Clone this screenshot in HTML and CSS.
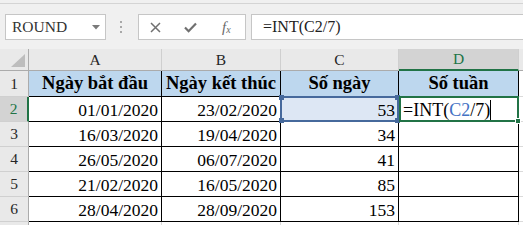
FILE: index.html
```html
<!DOCTYPE html>
<html>
<head>
<meta charset="utf-8">
<link rel="stylesheet" href="styles.css">
</head>
<body>
<div class="app">
  <div class="topstrip"></div>
  <div class="toolbar">
    <div class="namebox">
      <span class="nb-text">ROUND</span>
      <svg class="dd" width="8" height="5" viewBox="0 0 8 5"><path d="M0 0H8L4 4.5Z" fill="#7a7a7a"/></svg>
    </div>
    <div class="grip"><i></i><i></i><i></i></div>
    <div class="fxbox">
      <svg class="ico-x" width="11" height="11" viewBox="0 0 11 11"><path d="M1 1L10 10M10 1L1 10" stroke="#707070" stroke-width="1.5" fill="none"/></svg>
      <svg class="ico-ok" width="13" height="11" viewBox="0 0 13 11"><path d="M1 5.5L4.6 9.2L12 1.5" stroke="#707070" stroke-width="2.2" fill="none"/></svg>
      <span class="fx"><i>f</i><sub>x</sub></span>
    </div>
    <div class="formula">=INT(C2/7)</div>
  </div>
  <div class="sheet">
    <div class="corner"><svg class="tri" width="14" height="13" viewBox="0 0 14 13"><path d="M0 13H14V0Z" fill="#bdbdbd"/></svg></div>
    <div class="ch">A</div>
    <div class="ch">B</div>
    <div class="ch">C</div>
    <div class="ch sel">D</div>
    <div class="ch end"></div>

    <div class="rh">1</div>
    <div class="c hd">Ngày bắt đầu</div>
    <div class="c hd">Ngày kết thúc</div>
    <div class="c hd">Số ngày</div>
    <div class="c hd">Số tuần</div>
    <div class="e"></div>

    <div class="rh sel">2</div>
    <div class="c">01/01/2020</div>
    <div class="c">23/02/2020</div>
    <div class="c ref">53<span class="refbox"><b class="h tl"></b><b class="h tr"></b><b class="h bl"></b><b class="h br"></b></span></div>
    <div class="c act">=INT(<span class="blue">C2</span>/7)<span class="caret"></span><span class="actbox"><b class="gh"></b></span></div>
    <div class="e"></div>

    <div class="rh">3</div>
    <div class="c">16/03/2020</div>
    <div class="c">19/04/2020</div>
    <div class="c">34</div>
    <div class="c"></div>
    <div class="e"></div>

    <div class="rh">4</div>
    <div class="c">26/05/2020</div>
    <div class="c">06/07/2020</div>
    <div class="c">41</div>
    <div class="c"></div>
    <div class="e"></div>

    <div class="rh">5</div>
    <div class="c">21/02/2020</div>
    <div class="c">16/05/2020</div>
    <div class="c">85</div>
    <div class="c"></div>
    <div class="e"></div>

    <div class="rh">6</div>
    <div class="c">28/04/2020</div>
    <div class="c">28/09/2020</div>
    <div class="c">153</div>
    <div class="c"></div>
    <div class="e"></div>

    <div class="rh last">7</div>
    <div class="g"></div>
    <div class="g"></div>
    <div class="g"></div>
    <div class="g"></div>
    <div class="e"></div>
  </div>
</div>
</body>
</html>
```
FILE: styles.css
```css
* { box-sizing: border-box; margin: 0; padding: 0; }
html, body { width: 523px; height: 225px; overflow: hidden; background: #fff; }
body { font-family: "Liberation Serif", "Times New Roman", serif; color: #000; }

.topstrip { height: 4px; background: #f0f0f0; border-bottom: 1px solid #d4d4d4; }
.toolbar { height: 45px; background: #f0f0f0; display: flex; align-items: flex-start; padding-top: 10px; }

.namebox { margin-left: 5px; width: 101px; height: 26px; background: #fff; border: 1px solid #c6c6c6; display: flex; align-items: center; padding-left: 6px; padding-right: 5px; }
.nb-text { flex: 1; font-size: 15.5px; color: #333; }
.dd { display: block; }

.grip { margin-left: 14px; width: 2px; display: flex; flex-direction: column; gap: 3px; padding-top: 7px; }
.grip i { display: block; width: 2px; height: 2px; background: #a8a8a8; }

.fxbox { margin-left: 16px; width: 108px; height: 26px; background: #fff; border: 1px solid #c6c6c6; display: flex; align-items: center; padding-left: 11px; }
.ico-x { display: block; }
.ico-ok { display: block; margin-left: 23px; }
.fx { margin-left: 25px; font-size: 15px; color: #6a6a6a; line-height: 1; }
.fx i { font-style: italic; }
.fx sub { font-size: 10px; font-style: italic; vertical-align: -1px; }

.formula { margin-left: 5px; flex: 1; margin-right: -2px; height: 26px; background: #fff; border: 1px solid #c6c6c6; padding-left: 11px; font-size: 16px; line-height: 24px; color: #222; }

.sheet { display: grid; grid-template-columns: 29px 133px 119px 118px 120px 1fr; grid-template-rows: 22px 26px repeat(5, 25px) 1fr; height: 176px; }

.corner { background: #e9e9e9; border-right: 1px solid #ababab; border-bottom: 1px solid #ababab; display: flex; align-items: flex-end; justify-content: flex-end; padding: 0 3px 3px 0; }
.tri { display: block; }

.ch { background: #e9e9e9; border-right: 1px solid #cfcfcf; border-bottom: 1px solid #ababab; display: flex; align-items: center; justify-content: center; font-size: 15.5px; color: #262626; }
.ch.sel { background: #d3d3d3; color: #217346; border-bottom: 2px solid #217346; }
.ch.end { border-right: none; }

.rh { background: #e9e9e9; border-right: 1px solid #ababab; border-bottom: 1px solid #d0d0d0; display: flex; justify-content: center; align-items: flex-end; padding-bottom: 3px; font-size: 15.5px; color: #262626; }
.rh.sel { background: #d3d3d3; color: #217346; border-right: 2px solid #217346; }
.rh.last { border-bottom: none; }

.c { border-right: 1px solid #000; border-bottom: 1px solid #000; font-size: 17.5px; display: flex; align-items: flex-end; justify-content: flex-end; padding-right: 3px; white-space: nowrap; }
.c.hd { background: #bdd7ee; font-weight: bold; font-size: 18.5px; justify-content: center; align-items: center; padding-right: 0; }

.c.ref { background: #dde7f4; position: relative; }
.refbox { position: absolute; left: -1px; top: -1px; right: -1px; bottom: -1px; border: 2px solid #46699c; }
.h { position: absolute; width: 5px; height: 5px; background: #46699c; }
.h.tl { left: -3px; top: -3px; }
.h.tr { right: -3px; top: -3px; }
.h.bl { left: -3px; bottom: -3px; }
.h.br { right: -3px; bottom: -3px; }

.c.act { position: relative; justify-content: flex-start; padding-left: 4px; padding-right: 0; font-size: 18px; }
.blue { color: #4472c4; }
.caret { display: inline-block; width: 1px; height: 21px; background: #000; align-self: flex-end; }
.actbox { position: absolute; left: 0; top: -1px; right: -1px; bottom: -1px; border: 2px solid #217346; }
.gh { position: absolute; right: -4px; bottom: -4px; width: 6px; height: 6px; background: #217346; border: 1px solid #fff; }

.e { border-bottom: 1px solid #dadada; }
.g { border-right: 1px solid #dadada; }
```
